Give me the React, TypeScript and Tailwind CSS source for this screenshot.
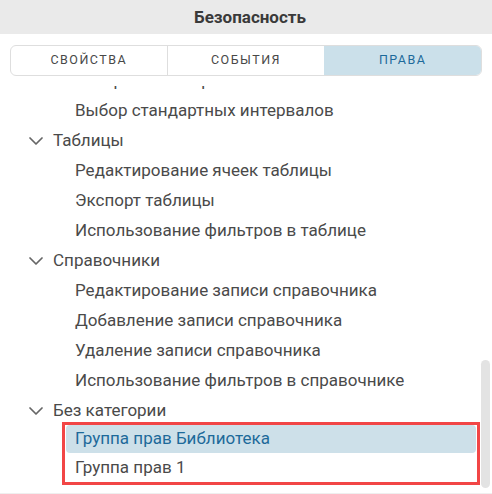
import { ChevronDown } from "lucide-react"

type Node = { label: string; cat?: boolean; active?: boolean }

const rows: Node[] = [
  { label: "Настройка интервалов" },
  { label: "Выбор стандартных интервалов" },
  { label: "Таблицы", cat: true },
  { label: "Редактирование ячеек таблицы" },
  { label: "Экспорт таблицы" },
  { label: "Использование фильтров в таблице" },
  { label: "Справочники", cat: true },
  { label: "Редактирование записи справочника" },
  { label: "Добавление записи справочника" },
  { label: "Удаление записи справочника" },
  { label: "Использование фильтров в справочнике" },
  { label: "Без категории", cat: true },
]

function Row({ n }: { n: Node }) {
  if (n.cat) {
    return (
      <div className="h-[30px] shrink-0 flex items-center pl-6 text-[17px] text-[#4a4a4a]">
        <ChevronDown size={24} strokeWidth={1.75} className="text-[#666] shrink-0" />
        <span className="ml-[5px]">{n.label}</span>
      </div>
    )
  }
  return (
    <div className="h-[30px] shrink-0 flex items-center pl-[75px] text-[17px] text-[#4a4a4a] whitespace-nowrap">
      {n.label}
    </div>
  )
}

export default function App() {
  const tabs = ["Свойства", "События", "Права"]
  return (
    <div className="w-[492px] h-[494px] bg-white flex flex-col overflow-hidden font-['Roboto',sans-serif]">
      <div className="h-[34px] shrink-0 bg-[#eaeaea] flex items-center justify-center pl-[8px] pt-[2px] text-[17px] font-bold text-[#3a3a3a]">
        Безопасность
      </div>

      <div className="mt-[11px] mx-[10px] h-[31px] shrink-0 grid grid-cols-3 border border-[#dedede] rounded-md overflow-hidden">
        {tabs.map((t, i) => (
          <div
            key={t}
            className={
              "flex items-center justify-center uppercase text-[12.5px] tracking-[1.5px] " +
              (i === 2
                ? "bg-[#cbe0ea] text-[#1d6a9a]"
                : "text-[#484848] " + (i === 0 ? "border-r border-[#dedede]" : ""))
            }
          >
            {t}
          </div>
        ))}
      </div>

      <div className="mt-[10px] flex-1 min-h-0 flex border-b border-[#efefef]">
        <div className="flex-1 min-w-0 overflow-hidden flex flex-col justify-end pb-[8px]">
          {rows.map((r) => (
            <Row key={r.label} n={r} />
          ))}
          <div className="-mt-[4px] ml-[62px] mr-[1px] shrink-0 border-[3px] border-[#f24646] flex flex-col text-[17px] whitespace-nowrap">
            <div className="h-[28px] mx-px flex items-center pl-[9px] rounded bg-[#cde0e9] text-[#1d6a9a]">
              Группа прав Библиотека
            </div>
            <div className="h-[29px] mx-px flex items-center pl-[9px] text-[#4a4a4a]">
              Группа прав 1
            </div>
          </div>
        </div>
        <div className="w-[9px] mr-[2px] shrink-0 flex flex-col justify-end pb-[5px]">
          <div className="h-[128px] rounded-full bg-[#e3e3e3]" />
        </div>
      </div>
    </div>
  )
}
